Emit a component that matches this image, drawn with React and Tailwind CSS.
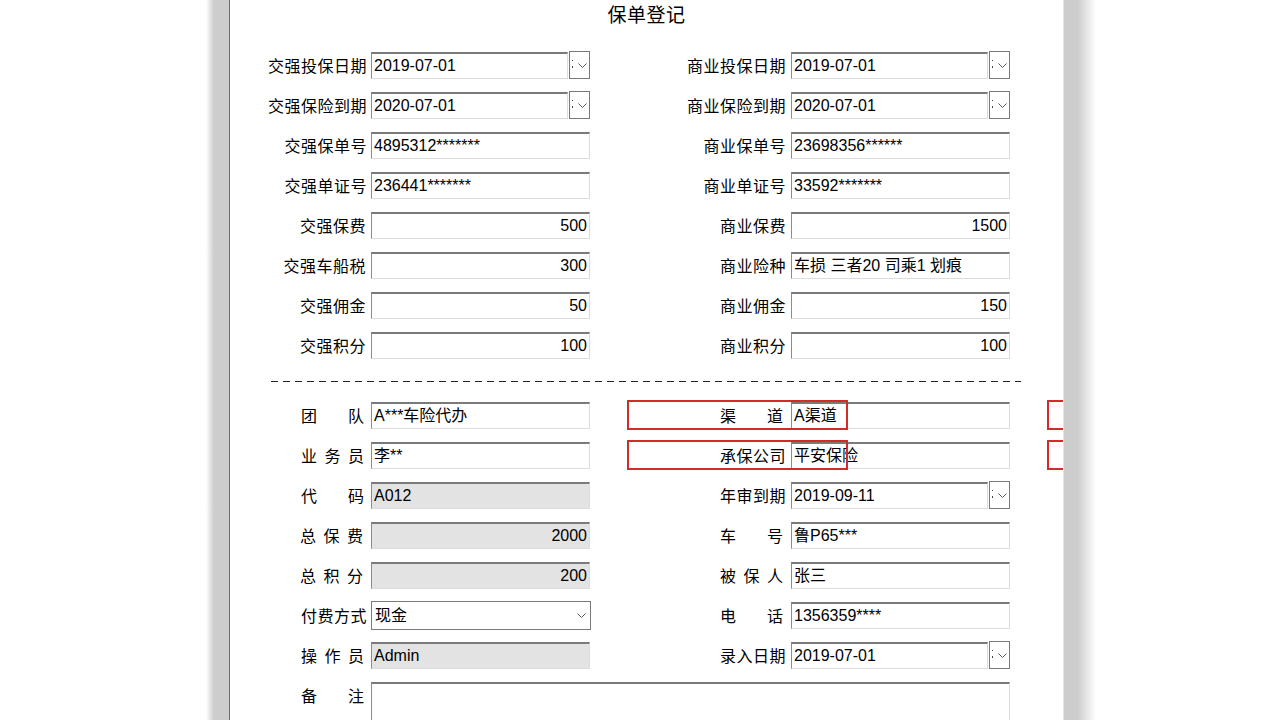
import clsx from 'clsx';

const topRows = [
  [{ label: '交强投保日期', value: '2019-07-01', date: true }, { label: '商业投保日期', value: '2019-07-01', date: true }],
  [{ label: '交强保险到期', value: '2020-07-01', date: true }, { label: '商业保险到期', value: '2020-07-01', date: true }],
  [{ label: '交强保单号', value: '4895312*******' }, { label: '商业保单号', value: '23698356******' }],
  [{ label: '交强单证号', value: '236441*******' }, { label: '商业单证号', value: '33592*******' }],
  [{ label: '交强保费', value: '500', right: true }, { label: '商业保费', value: '1500', right: true }],
  [{ label: '交强车船税', value: '300', right: true }, { label: '商业险种', value: '车损 三者20 司乘1 划痕' }],
  [{ label: '交强佣金', value: '50', right: true }, { label: '商业佣金', value: '150', right: true }],
  [{ label: '交强积分', value: '100', right: true }, { label: '商业积分', value: '100', right: true }],
];

const bottomRows = [
  [{ label: '团队', spaced: true, value: 'A***车险代办' }, { label: '渠道', spaced: true, value: 'A渠道' }],
  [{ label: '业务员', spaced: true, value: '李**' }, { label: '承保公司', value: '平安保险' }],
  [{ label: '代码', spaced: true, value: 'A012', gray: true }, { label: '年审到期', value: '2019-09-11', date: true }],
  [{ label: '总保费', spaced: true, value: '2000', gray: true, right: true }, { label: '车号', spaced: true, value: '鲁P65***' }],
  [{ label: '总积分', spaced: true, value: '200', gray: true, right: true }, { label: '被保人', spaced: true, value: '张三' }],
  [{ label: '付费方式', value: '现金', select: true }, { label: '电话', spaced: true, value: '1356359****' }],
  [{ label: '操作员', spaced: true, value: 'Admin', gray: true }, { label: '录入日期', value: '2019-07-01', date: true }],
];

const Chevron = () => (
  <svg width="9" height="5" viewBox="0 0 9 5" className="shrink-0">
    <path d="M0.5 0.5 L4.5 4.5 L8.5 0.5" fill="none" stroke="#555" strokeWidth="1" />
  </svg>
);

const DateButton = () => (
  <div className="ml-[1px] flex h-[28px] w-[21px] -mt-[1px] items-center border border-[#7a7a7a] bg-white pl-[2px]">
    <svg width="3" height="12" viewBox="0 0 3 12" className="shrink-0">
      <rect x="0" y="1" width="1" height="1" fill="#444" />
      <rect x="0" y="7" width="1" height="2" fill="#444" />
    </svg>
    <div className="ml-[3px]">
      <Chevron />
    </div>
  </div>
);

const Label = ({ text, spaced, right }) => (
  <div className={clsx('flex h-[27px] justify-end pt-[3px] leading-[24px]', right ? 'pr-[5px]' : 'pr-[4px]')}>
    {spaced ? (
      <span className="mr-[3px] flex w-[63px] justify-between">
        {text.split('').map((c, i) => (
          <span key={i}>{c}</span>
        ))}
      </span>
    ) : (
      <span className="tracking-[0.5px]">{text}</span>
    )}
  </div>
);

const Field = ({ value, right, gray, date, select }) => {
  if (select) {
    return (
      <div className="-mt-[1px] flex h-[29px] w-[220px] items-center justify-between border border-[#7a7a7a] bg-white pl-[3px] pr-[4px]">
        <span>{value}</span>
        <Chevron />
      </div>
    );
  }
  return (
    <div className="flex h-[27px] w-[219px]">
      <div
        className={clsx(
          'h-[27px] overflow-hidden whitespace-nowrap border-b border-l border-r border-t-2 border-b-[#dcdcdc] border-l-[#8c8c8c] border-r-[#dcdcdc] border-t-[#7a7a7a] px-[2px] leading-[23px]',
          date ? 'w-[197px]' : 'w-[219px]',
          right && 'text-right',
          gray ? 'bg-[#e3e3e3]' : 'bg-white'
        )}
      >
        {value}
      </div>
      {date && <DateButton />}
    </div>
  );
};

const Row = ({ row }) => (
  <div className="grid h-[40px] grid-cols-[141px_219px_201px_219px] items-start">
    <Label {...row[0]} text={row[0].label} />
    <Field {...row[0]} />
    <Label {...row[1]} text={row[1].label} right />
    <Field {...row[1]} />
  </div>
);

const RedBox = ({ className }) => (
  <div className={clsx('absolute h-[30px] w-[221px] border-2 border-solid border-[#d42a2a]', className)} />
);

export default function App() {
  return (
    <div className="flex h-[720px] w-[1280px] overflow-hidden bg-white font-['Liberation_Sans','Noto_Sans_CJK_SC',sans-serif] text-[16px] text-black">
      <div className="ml-[206px] w-[8px] bg-[linear-gradient(to_right,#ffffff,#cdcdcd)]" />
      <div className="w-[16px] border-r border-r-[#6e6e6e] bg-[#cdcdcd]" />
      <div className="relative w-[833px] overflow-hidden bg-white">
        <div className="flex h-[32px] items-center justify-center text-[19px] tracking-[0.5px]">保单登记</div>

        <div className="pt-[20px]">
          {topRows.map((row, i) => (
            <Row key={i} row={row} />
          ))}
        </div>

        <div className="ml-[41px] mt-[9px] h-[1px] w-[750px] bg-[repeating-linear-gradient(to_right,#222_0_7px,transparent_7px_12px)]" />

        <div className="pt-[20px]">
          {bottomRows.map((row, i) => (
            <Row key={i} row={row} />
          ))}
          <div className="grid grid-cols-[141px_639px] items-start">
            <Label text="备注" spaced />
            <div className="h-[80px] border-b border-l border-r border-t-2 border-b-[#dcdcdc] border-l-[#8c8c8c] border-r-[#dcdcdc] border-t-[#7a7a7a] bg-white" />
          </div>
        </div>

        {/* red highlight boxes */}
        <RedBox className="left-[397px] top-[400px]" />
        <RedBox className="left-[397px] top-[440px]" />
        <RedBox className="left-[817px] top-[400px]" />
        <RedBox className="left-[817px] top-[440px]" />
      </div>
      <div className="w-[1px] bg-[#e6e6e6]" />
      <div className="w-[14px] bg-[#cdcdcd]" />
      <div className="w-[18px] bg-[linear-gradient(to_right,#cdcdcd,#ffffff)]" />
    </div>
  );
}
